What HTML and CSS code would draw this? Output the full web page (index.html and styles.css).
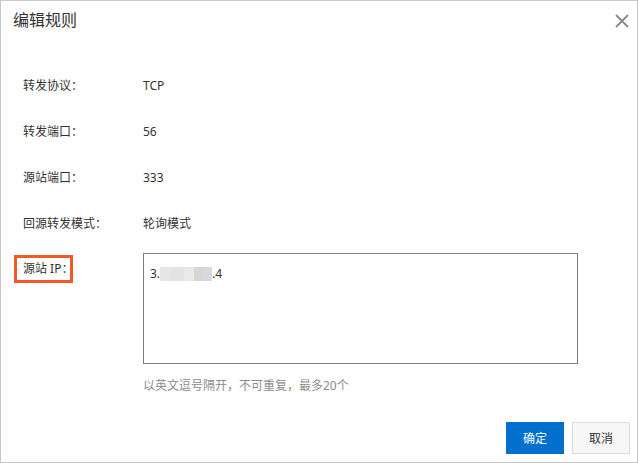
FILE: index.html
```html
<!DOCTYPE html>
<html lang="zh-CN">
<head>
<meta charset="utf-8">
<title>编辑规则</title>
<link rel="stylesheet" href="styles.css">
</head>
<body>
<div class="dialog">
  <div class="header">
    <div class="title">编辑规则</div>
    <svg class="close" width="14" height="14" viewBox="0 0 14 14"><path d="M1 1L13 13M13 1L1 13" stroke="#888" stroke-width="1.8" fill="none"/></svg>
  </div>
  <div class="form">
    <div class="row"><div class="label">转发协议：</div><div class="value">TCP</div></div>
    <div class="row"><div class="label">转发端口：</div><div class="value">56</div></div>
    <div class="row"><div class="label">源站端口：</div><div class="value">333</div></div>
    <div class="row"><div class="label">回源转发模式：</div><div class="value">轮询模式</div></div>
    <div class="row-ip">
      <div class="label-ip"><div class="mark">源站 IP：</div></div>
      <div class="field">
        <div class="textarea"><span>3.</span><span class="blur"><i class="b1"></i><i class="b2"></i><i class="b3"></i><i class="b4"></i><i class="b5"></i></span><span>.4</span></div>
        <div class="hint">以英文逗号隔开，不可重复，最多20个</div>
      </div>
    </div>
  </div>
  <div class="footer">
    <button class="btn primary">确定</button>
    <button class="btn">取消</button>
  </div>
</div>
</body>
</html>
```
FILE: styles.css
```css
* { box-sizing: border-box; }
html, body { margin: 0; padding: 0; background: #fff; }
body { font-family: "Noto Sans", "Noto Sans CJK SC", sans-serif; color: #333; font-size: 12px; }
.dialog {
  width: 638px; height: 463px;
  border: 1px solid #c8c8c8;
  display: flex; flex-direction: column;
  background: #fff;
}
.header {
  display: flex; justify-content: space-between; align-items: center;
  padding: 9px 8px 0 12px;
  height: 29px;
}
.title { font-size: 16px; line-height: 20px; color: #333; }
.close { display: block; margin-top: 1px; }
.form { margin-top: 33px; padding-left: 22px; }
.row { display: flex; align-items: center; height: 46px; }
.label { width: 120px; line-height: 18px; }
.value { line-height: 18px; }
.row-ip { display: flex; padding-top: 6px; }
.label-ip { width: 120px; padding-top: 2px; }
.mark {
  margin-left: -9px;
  border: 3px solid #f05a28;
  padding: 0 0 0 6px;
  width: 59px;
  white-space: nowrap;
  overflow: hidden;
  line-height: 22px;
  height: 28px;
}
.field { display: flex; flex-direction: column; }
.textarea {
  width: 435px; height: 111px;
  border: 1px solid #7d7d7d;
  padding: 11px 6px;
  line-height: 18px;
  display: flex; align-items: flex-start;
}
.blur { display: inline-flex; height: 14px; margin-top: 2px; }
.blur i { display: block; height: 14px; }
.b1 { width: 10px; background: #e6e6e6; }
.b2 { width: 14px; background: #e2e3e2; }
.b3 { width: 10px; background: #e9e9e9; }
.b4 { width: 9px; background: #d9d6cf; }
.b5 { width: 9px; background: #d6dadd; }
.hint { margin-top: 13px; line-height: 18px; color: #8c8c8c; }
.footer {
  margin-top: auto;
  display: flex; justify-content: flex-end; gap: 8px;
  padding: 0 7px 8px 0;
}
.btn {
  width: 58px; height: 32px;
  font-family: inherit; font-size: 12px;
  border: 1px solid #dcdcdc; background: #f7f7f7; color: #333;
  padding: 0; cursor: pointer;
}
.btn.primary { background: #0070cc; border-color: #0070cc; color: #fff; }
```
